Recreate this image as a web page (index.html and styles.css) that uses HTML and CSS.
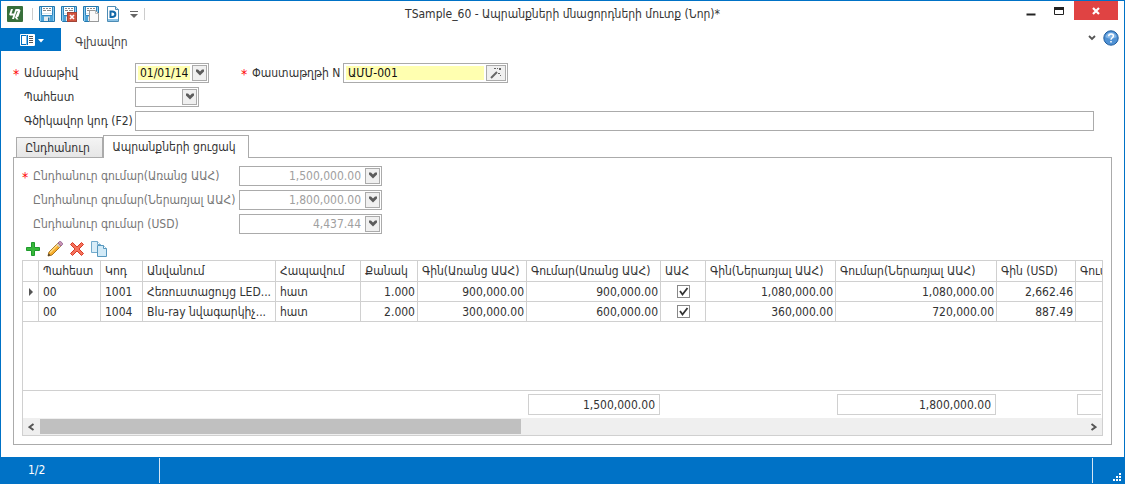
FILE: index.html
```html
<!DOCTYPE html>
<html lang="hy">
<head>
<meta charset="utf-8">
<meta name="viewport" content="width=device-width, initial-scale=1">
<title>TSample_60 - Ապրանքների մնացորդների մուտք (Նոր)*</title>
<link rel="stylesheet" href="styles.css">
</head>
<body>
<svg class="symbols" width="0" height="0" aria-hidden="true">
  <symbol id="chevron" viewBox="0 0 14 15"><path d="M3 4.500h2l2 2 2-2h2v2l-4 4-4-4z" fill="#5c5c5c"/></symbol>
  <symbol id="floppy" viewBox="0 0 16 16">
    <path d="M.5.500h15v15h-14l-1-1z" fill="#8fcdf0" stroke="#2478ae"/>
    <path d="M2.500 1v8.500h11V1" fill="#fff" stroke="#2f87c0"/>
    <path d="M4 2.500h2m1 0h2m1 0h2M4 4.500h3m1 0h4" stroke="#8a8a8a"/>
    <path d="M3 7.500h10" stroke="#d9e6ee"/>
    <path d="M2 10h12v5H2z" fill="#4ba3d8"/>
    <path d="M5 10.500h6V15H5z" fill="#e4ebf0"/><path d="M9 11.500h1.500V15H9z" fill="#2b78a8"/>
  </symbol>
</svg>
<div class="window">
  <header class="titlebar">
    <div class="quick">
      <svg class="logo" viewBox="0 0 16 16" width="16" height="16"><rect width="16" height="16" rx="1" fill="#38703b"/><path d="M4 3h2L4.500 7.500H7L8.500 3h3.700l1.300 1.500-2 6-1.500 1 1.500 2H9.500L8 11.500 10.800 5H9.700L7 13H5l1.200-3.500H3L2.200 8.500z" fill="#fff"/></svg>
      <span class="divider"></span>
      <button aria-label="Պահպանել"><svg width="16" height="16"><use href="#floppy"/></svg></button>
      <button aria-label="Պահպանել և փակել"><svg width="16" height="16"><use href="#floppy"/><rect x="6.500" y="6.500" width="9" height="9" fill="#d4553f" stroke="#a04438"/><path d="M9 9l4 4m0-4l-4 4" stroke="#fff" stroke-width="1.600"/></svg></button>
      <button aria-label="Պահպանել և ավելացնել"><svg width="16" height="16"><use href="#floppy"/><path d="M6.500 4.500h6l3 3v8h-9z" fill="#fafafa" stroke="#999"/><path d="M12.500 4.500v3h3" fill="none" stroke="#bbb"/></svg></button>
      <button aria-label="Փաստաթուղթ"><svg width="16" height="16"><path d="M2.500.500h8l3 3v12h-11z" fill="#fff" stroke="#4d8cb5"/><path d="M10.500.500v3h3" fill="#cde6f5" stroke="#4d8cb5"/><path d="M5.500 4.500v6.500h1.500c4.500 0 4.500-5.500 0-5.500H5" fill="none" stroke="#1268a8" stroke-width="2"/><path d="M3 13h10v2H3z" fill="#8ac2e5"/></svg></button>
      <button aria-label="Կարգավորել" class="narrow"><svg width="8" height="8"><path d="M0 1.500h8" stroke="#666"/><path d="M0 4h8L4 8z" fill="#666"/></svg></button>
      <span class="divider"></span>
    </div>
    <h1>TSample_60 - Ապրանքների մնացորդների մուտք (Նոր)*</h1>
    <div class="controls">
      <button aria-label="Ծալել"><svg width="10" height="12"><path d="M.5 9.500h9" stroke="#222" stroke-width="2"/></svg></button>
      <button aria-label="Մեծացնել"><svg width="10" height="12"><path d="M.5 3v6.500h9V3" fill="none" stroke="#222"/><path d="M0 3.500h10" stroke="#222" stroke-width="3"/></svg></button>
      <button aria-label="Փակել" class="close"><svg width="8" height="8"><path d="M1 1l6 6m0-6L1 7" stroke="#fff" stroke-width="2.200"/></svg></button>
    </div>
  </header>
  <nav class="ribbon">
    <button class="app" aria-label="Ընտրացանկ"><svg width="24" height="12"><rect x="0" y="0" width="15" height="12" rx="1" fill="#fff"/><path d="M1 1h5.500v10H1z" fill="#0072c6"/><path d="M2 2h4v8H2z" fill="#fff"/><path d="M7.500 1v10" stroke="#0072c6"/><path d="M9 2.500h4M9 4.500h4M9 6.500h4M9 8.500h4" stroke="#555"/><path d="M18 5h6l-3 3.500z" fill="#fff"/></svg></button>
    <a href="#main">Գլխավոր</a>
    <div class="help">
      <button aria-label="Թաքցնել"><svg width="8" height="6"><path d="M1 1l3 3 3-3" fill="none" stroke="#555" stroke-width="1.800"/></svg></button>
      <button aria-label="Օգնություն"><svg width="16" height="16"><circle cx="8" cy="8" r="7.200" fill="#4f91d4" stroke="#1e5c9e"/><path d="M2.500 7a5.600 5.600 0 0 1 11 0c-3 2-8 2-11 0" fill="#85b7e7"/><path d="M5.700 6.300c0-3.300 4.700-3 4.700-.3C10.400 7.800 8 7.700 8 9.700" fill="none" stroke="#fff" stroke-width="1.500"/><path d="M7.200 11h1.600v1.600H7.200z" fill="#fff"/></svg></button>
    </div>
  </nav>
  <main id="main">
    <form class="fields">
      <div class="row">
        <span class="star">*</span><label class="name" for="date">Ամսաթիվ</label>
        <span class="box date"><input id="date" class="required" value="01/01/14"><button type="button" aria-label="Ընտրել ամսաթիվը"><svg width="14" height="15"><use href="#chevron"/></svg></button></span>
        <span class="star second">*</span><label class="docname" for="doc">Փաստաթղթի N</label>
        <span class="box doc"><input id="doc" class="required" value="ԱՄՄ-001"><button type="button" class="wand" aria-label="Լրացնել"><svg width="12" height="12"><path d="M1 11l6-6" stroke="#666" stroke-width="2"/><path d="M4 1h2v1H4zM7 1h1v1H7zM9 1h2v2H9zM8 6h2v1H8zM10 8h1v1h-1z" fill="#666"/></svg></button></span>
      </div>
      <div class="row">
        <span class="star"></span><label class="name" for="store">Պահեստ</label>
        <span class="box store"><select id="store"><option></option></select><span class="arrow"><svg width="14" height="15"><use href="#chevron"/></svg></span></span>
      </div>
      <div class="row">
        <span class="star"></span><label class="name" for="bar">Գծիկավոր կոդ (F2)</label>
        <span class="box bar"><input id="bar"></span>
      </div>
    </form>
    <div class="tabs" role="tablist">
      <button role="tab" aria-selected="false">Ընդհանուր</button>
      <button role="tab" aria-selected="true" class="active">Ապրանքների ցուցակ</button>
    </div>
    <section class="panel">
      <div class="totals">
        <div class="row"><span class="star">*</span><label class="total" for="t1">Ընդհանուր գումար(Առանց ԱԱՀ)</label><span class="box sum"><input id="t1" value="1,500,000.00" disabled><button disabled aria-label="Հաշվիչ"><svg width="14" height="15"><use href="#chevron"/></svg></button></span></div>
        <div class="row"><span class="star"></span><label class="total" for="t2">Ընդհանուր գումար(Ներառյալ ԱԱՀ)</label><span class="box sum"><input id="t2" value="1,800,000.00" disabled><button disabled aria-label="Հաշվիչ"><svg width="14" height="15"><use href="#chevron"/></svg></button></span></div>
        <div class="row"><span class="star"></span><label class="total" for="t3">Ընդհանուր գումար (USD)</label><span class="box sum"><input id="t3" value="4,437.44" disabled><button disabled aria-label="Հաշվիչ"><svg width="14" height="15"><use href="#chevron"/></svg></button></span></div>
      </div>
      <div class="tools">
        <button aria-label="Ավելացնել"><svg width="16" height="16"><path d="M6.500 1.500h3v5h5v3h-5v5h-3v-5h-5v-3h5z" fill="#38b83a" stroke="#1f9a2d"/></svg></button>
        <button aria-label="Խմբագրել"><svg width="16" height="16"><path d="M1 15l1-4L11 2l3 3-9 9z" fill="#f7ae2c" stroke="#a87420"/><path d="M3 11.500L11.500 3" stroke="#ffdc83" stroke-width="1.500"/><path d="M11 2l1.500-1.500h1.200l1.800 1.800v1.200L14 5z" fill="#c994b5" stroke="#9a6c98"/><path d="M10 3l3 3" stroke="#ccc" stroke-width="1.500"/><path d="M1 15l.7-2.500 1.800 1.800z" fill="#333"/></svg></button>
        <button aria-label="Ջնջել"><svg width="16" height="16"><path d="M1.500 3.500l2-2L8 6l4.500-4.500 2 2L10 8l4.500 4.500-2 2L8 10l-4.500 4.500-2-2L6 8z" fill="#f4725c" stroke="#d93a26"/></svg></button>
        <button aria-label="Պատճենել"><svg width="16" height="16"><path d="M.5.500h6l3 3v8h-9z" fill="#d9edf8" stroke="#72aacc"/><path d="M6.500.500v3h3" fill="#fff" stroke="#72aacc"/><path d="M6.500 4.500h6l3 3v8h-9z" fill="#d2eaf7" stroke="#5798bf"/><path d="M12.500 4.500v3h3" fill="#fff" stroke="#5798bf"/></svg></button>
      </div>
      <div class="grid">
        <div class="clip">
          <table>
            <colgroup><col class="mark"><col class="c-store"><col class="c-code"><col class="c-name"><col class="c-unit"><col class="c-qty"><col class="c-price"><col class="c-sum"><col class="c-vat"><col class="c-price2"><col class="c-sum2"><col class="c-usd"><col></colgroup>
            <thead><tr><th></th><th>Պահեստ</th><th>Կոդ</th><th>Անվանում</th><th>Հապավում</th><th>Քանակ</th><th>Գին(Առանց ԱԱՀ)</th><th>Գումար(Առանց ԱԱՀ)</th><th>ԱԱՀ</th><th>Գին(Ներառյալ ԱԱՀ)</th><th>Գումար(Ներառյալ ԱԱՀ)</th><th>Գին (USD)</th><th>Գում</th></tr></thead>
            <tbody>
              <tr><td class="mark"><svg width="4" height="8"><path d="M0 0l4 4-4 4z" fill="#555"/></svg></td><td>00</td><td>1001</td><td>Հեռուստացույց LED...</td><td>հատ</td><td class="num">1.000</td><td class="num">900,000.00</td><td class="num">900,000.00</td><td class="check"><input type="checkbox" checked aria-label="ԱԱՀ"></td><td class="num">1,080,000.00</td><td class="num">1,080,000.00</td><td class="num">2,662.46</td><td></td></tr>
              <tr><td></td><td>00</td><td>1004</td><td>Blu-ray նվագարկիչ...</td><td>հատ</td><td class="num">2.000</td><td class="num">300,000.00</td><td class="num">600,000.00</td><td class="check"><input type="checkbox" checked aria-label="ԱԱՀ"></td><td class="num">360,000.00</td><td class="num">720,000.00</td><td class="num">887.49</td><td></td></tr>
              <tr class="blank"><td colspan="13"></td></tr>
            </tbody>
            <tfoot><tr><td colspan="7"></td><td><output>1,500,000.00</output></td><td colspan="2"></td><td><output>1,800,000.00</output></td><td></td><td><output class="open"></output></td></tr></tfoot>
          </table>
        </div>
        <div class="scroll">
          <button aria-label="Ձախ"><svg width="7" height="8"><path d="M5.500 1l-4 3 4 3" fill="none" stroke="#555" stroke-width="2"/></svg></button>
          <div class="track"><div class="thumb"></div></div>
          <button aria-label="Աջ"><svg width="7" height="8"><path d="M1.500 1l4 3-4 3" fill="none" stroke="#555" stroke-width="2"/></svg></button>
        </div>
      </div>
    </section>
  </main>
  <footer class="status">
    <span class="pos">1/2</span>
    <span class="grip"><svg width="8" height="8"><path d="M6 0h2v2H6zM3 3h2v2H3zM6 3h2v2H6zM0 6h2v2H0zM3 6h2v2H3zM6 6h2v2H6z" fill="#fff"/></svg></span>
  </footer>
</div>
</body>
</html>
```
FILE: styles.css
```css
* { box-sizing: border-box; }
body { margin: 0; background: #fff; color: #333; font: 12px/16px "DejaVu Sans Condensed", "DejaVu Sans", sans-serif; }
button, input, select { font: inherit; color: inherit; margin: 0; padding: 0; border: 0; background: none; border-radius: 0; outline: 0; }
svg { display: block; flex: none; }
.symbols { position: absolute; }
.window { display: flex; flex-direction: column; min-height: 100vh; border: solid #0072c6; border-width: 1px 1px 0; }

.titlebar { display: grid; grid-template-columns: 1fr auto 1fr; height: 27px; }
.quick { display: flex; align-items: center; gap: 6px; padding: 0 0 2px 6px; }
.quick .divider { width: 1px; height: 12px; margin: 0 0 0 3px; background: #ccc; }
.quick .divider:last-child { margin: 0; }
.quick .narrow { padding-left: 3px; }
h1 { margin: 0; font-size: 12px; font-weight: 400; line-height: 27px; white-space: nowrap; }
.controls { display: flex; justify-content: flex-end; align-items: flex-start; padding-right: 6px; }
.controls button { display: flex; justify-content: center; align-items: center; width: 28px; height: 19px; }
.controls button.close { width: 44px; margin-left: 1px; background: #e04343; }

.ribbon { display: flex; align-items: flex-start; height: 32px; }
.ribbon .app { display: flex; align-items: center; width: 60px; height: 23px; padding-left: 19px; background: #0072c6; }
.ribbon a { padding-left: 14px; line-height: 29px; color: #444; text-decoration: none; }
.help { display: flex; align-items: center; gap: 7px; margin-left: auto; padding: 2px 5px 0 0; }

main { flex: 1; padding: 2px 12px 12px; }
.row { display: flex; align-items: center; height: 21px; margin-bottom: 3px; white-space: nowrap; }
.star { flex: none; width: 11px; color: #f00; font-size: 14px; line-height: 12px; height: 12px; padding-top: 1px; }
.name { flex: none; width: 111px; }
.second { margin-left: 32px; }
.docname { flex: none; width: 91px; }
.box { display: flex; align-items: stretch; height: 20px; padding: 1px; border: 1px solid #ababab; background: #fff; }
.box input { flex: 1; min-width: 0; width: 0; padding: 0 4px; color: #111; }
.box input.required { padding: 0 2px; border: solid #fff; border-width: 1px 2px 1px 1px; background: #ffffb0; }
.box select { flex: 1; min-width: 0; appearance: none; }
.box button, .arrow { display: flex; align-items: center; justify-content: center; flex: none; width: 15px; border: 1px solid #ababab; background: #f0f0f0; }
.arrow { pointer-events: none; }
.box .wand { width: 20px; }
.date { width: 74px; }
.doc { width: 165px; }
.store { width: 64px; }
.bar { flex: 1; margin-right: 18px; }
.fields { margin-bottom: 3px; }

.tabs { display: flex; align-items: flex-end; height: 23px; padding-left: 3px; }
.tabs button { width: 87px; height: 20px; padding-right: 4px; border: 1px solid #ababab; border-bottom: 0; background: linear-gradient(#f4f4f4, #e6e6e6); line-height: 18px; white-space: nowrap; }
.tabs button.active { z-index: 1; width: 146px; height: 23px; margin-bottom: -1px; background: #fff; }

.panel { padding: 7px 8px 8px; border: 1px solid #ababab; }
.totals label { flex: none; width: 206px; color: #777; }
.sum { width: 143px; }
.box input:disabled { color: #a0a0a0; text-align: right; }
.tools { display: flex; gap: 6px; padding: 4px 0 3px 3px; }

.grid { border: 1px solid #d0d0d0; }
.clip { overflow: hidden; }
table { width: 100%; min-width: 1079px; table-layout: fixed; border-collapse: separate; border-spacing: 0; }
th, td { height: 20px; padding: 0 3px 0 4px; border: solid #d0d0d0; border-width: 0 1px 1px 0; overflow: hidden; text-align: left; white-space: nowrap; font-weight: 400; line-height: 16px; }
th { height: 21px; }
th:last-child { padding-right: 0; }
th:last-child, td:last-child { border-right: 0; }
td.num { text-align: right; padding-right: 2px; }
td.mark { padding: 0 0 0 6px; }
td.check { padding: 0; }
.blank td { height: 69px; }
tfoot td { height: 27px; padding: 0 0 0 1px; border: 0; }
output { display: block; height: 21px; padding-right: 4px; border: 1px solid #d0d0d0; line-height: 20px; text-align: right; margin-right: 1px; }
output.open { border-right: 0; }
.mark { width: 16px; } .c-store { width: 62px; } .c-code { width: 42px; } .c-name { width: 133px; } .c-unit { width: 85px; }
.c-qty { width: 57px; } .c-price { width: 109px; } .c-sum { width: 134px; } .c-vat { width: 45px; } .c-price2 { width: 130px; }
.c-sum2 { width: 161px; } .c-usd { width: 79px; }
input[type="checkbox"] { appearance: none; display: block; width: 13px; height: 13px; margin: 0 auto; border: 1px solid #888; background: #fff url("data:image/svg+xml,%3Csvg xmlns='http://www.w3.org/2000/svg' width='11' height='11'%3E%3Cpath d='M2 5l2.500 3.500L9.500 2' fill='none' stroke='%23333' stroke-width='1.800'/%3E%3C/svg%3E"); }
.scroll { display: flex; height: 17px; background: #efefef; }
.scroll button { display: flex; align-items: center; justify-content: center; flex: none; width: 17px; }
.track { flex: 1; padding: 1px 0; }
.thumb { width: 46%; height: 15px; background: #c0c0c0; }

.status { display: flex; height: 27px; padding: 1px 0; background: #0072c6; color: #fff; }
.pos { width: 159px; padding-left: 27px; border-right: 1px solid #d5e6f4; line-height: 25px; }
.grip { display: flex; align-items: flex-end; justify-content: flex-end; width: 32px; margin-left: auto; padding: 0 3px 2px 0; border-left: 1px solid #d5e6f4; }
```
